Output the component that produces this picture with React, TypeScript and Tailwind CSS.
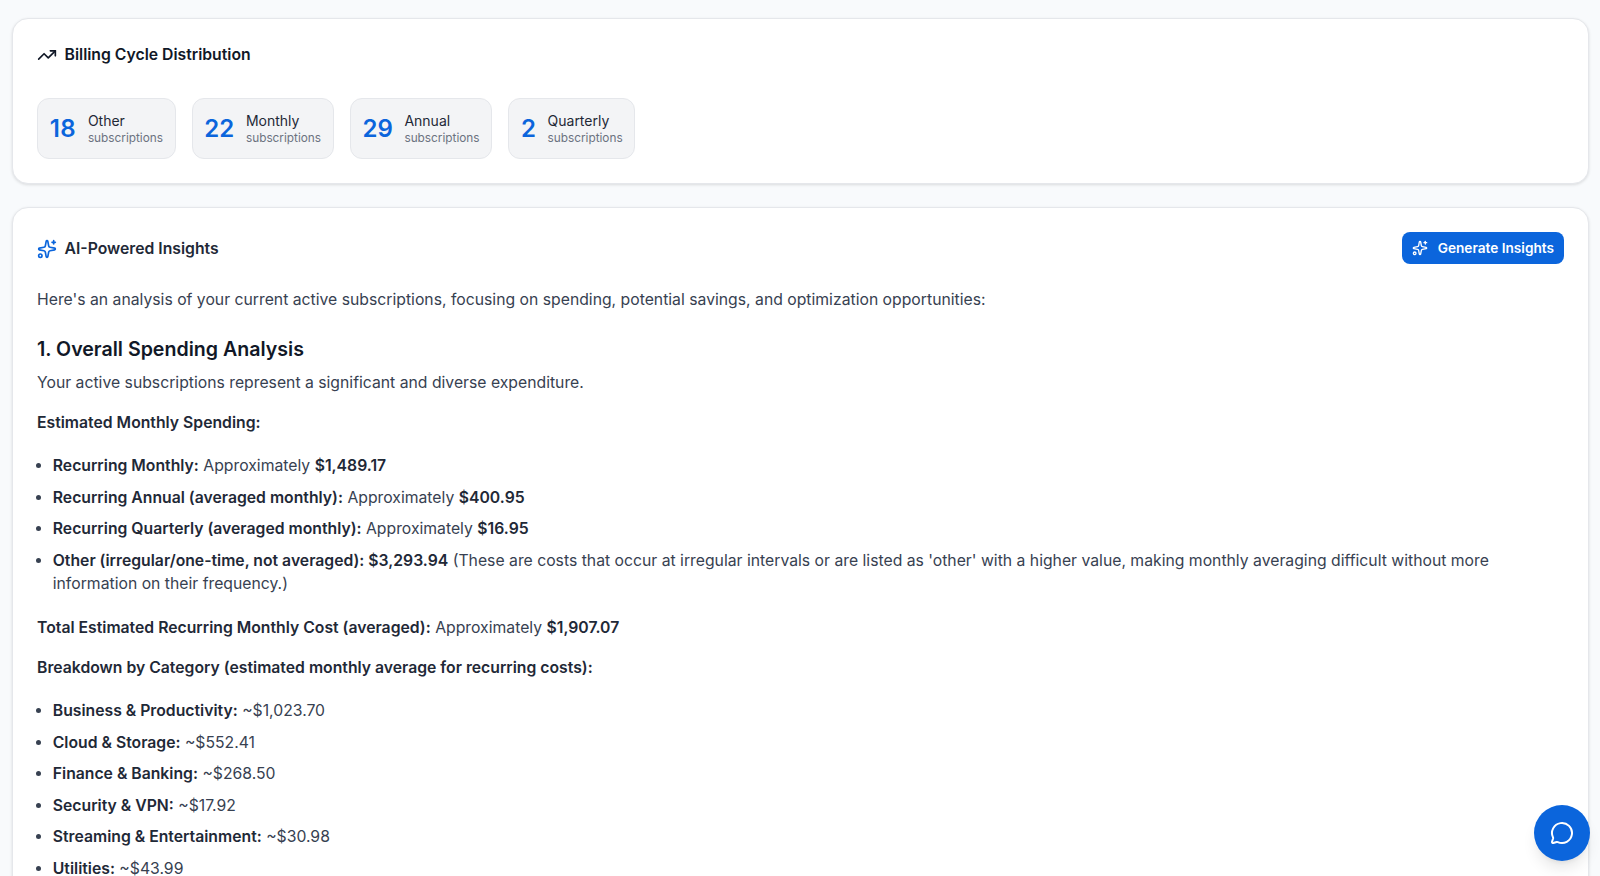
import { TrendingUp, Sparkles, MessageCircle } from "lucide-react";

const cycles = [
  { n: "18", label: "Other", track: "tracking-[0.5px]" },
  { n: "22", label: "Monthly", track: "" },
  { n: "29", label: "Annual", track: "" },
  { n: "2", label: "Quarterly", track: "" },
];

function Item({ children }: { children: React.ReactNode }) {
  return <li className="mb-2 leading-[23.6px]">{children}</li>;
}

function B({ children }: { children: React.ReactNode }) {
  return <b className="font-semibold text-[#1f2937]">{children}</b>;
}

export default function App() {
  return (
    <div className="h-[876px] overflow-hidden bg-[#f8fafc] pr-[11px] pl-3 pt-[18px] font-['Inter',sans-serif] text-[#374151]">
      <section className="h-[166px] rounded-2xl border border-[#e5e7eb] bg-white p-6 shadow-[0_1px_3px_rgba(0,0,0,0.12)]">
        <h2 className="flex h-[24px] items-center gap-[7.5px] text-[15.75px] font-semibold text-[#111827]">
          <TrendingUp size={20} strokeWidth={2} />
          Billing Cycle Distribution
        </h2>
        <div className="mt-[31px] flex gap-4">
          {cycles.map((c) => (
            <div key={c.label} className="flex h-[61px] items-center gap-[11.7px] rounded-xl border border-[#e5e7eb] bg-[#f3f4f6] px-[11.7px]">
              <span className={`text-2xl font-semibold text-[#0b65dc] ${c.track}`}>{c.n}</span>
              <div className="flex flex-col pt-px">
                <span className="text-[14px] leading-[18px] text-[#1f2937]">{c.label}</span>
                <span className="text-[11.8px] leading-[17px] text-[#6b7280]">subscriptions</span>
              </div>
            </div>
          ))}
        </div>
      </section>

      <section className="mt-[23px] h-[800px] rounded-2xl border border-[#e5e7eb] bg-white p-6 text-[15.75px] shadow-[0_1px_3px_rgba(0,0,0,0.12)]">
        <div className="flex h-[32px] items-center justify-between">
          <h2 className="mt-px flex items-center gap-[7.5px] text-[15.75px] font-semibold text-[#1f2937]">
            <Sparkles size={20} className="text-[#0b65dc]" />
            AI-Powered Insights
          </h2>
          <button className="flex h-[32px] items-center gap-[10px] rounded-lg bg-[#0b65dc] px-[10px] text-[13.65px] font-semibold text-white">
            <Sparkles size={16} />
            Generate Insights
          </button>
        </div>
        <p className="mt-[24px] leading-6">Here's an analysis of your current active subscriptions, focusing on spending, potential savings, and optimization opportunities:</p>
        <h3 className="mt-[23px] text-[19.6px] leading-7 font-semibold text-[#111827]">1. Overall Spending Analysis</h3>
        <p className="mt-2 leading-6">Your active subscriptions represent a significant and diverse expenditure.</p>
        <p className="mt-4 leading-6 font-semibold text-[#1f2937]">Estimated Monthly Spending:</p>
        <ul className="mt-[19px] list-disc pl-[15.75px]">
          <Item><B>Recurring Monthly:</B> Approximately <B>$1,489.17</B></Item>
          <Item><B>Recurring Annual (averaged monthly):</B> Approximately <B>$400.95</B></Item>
          <Item><B>Recurring Quarterly (averaged monthly):</B> Approximately <B>$16.95</B></Item>
          <Item><B>Other (irregular/one-time, not averaged): $3,293.94</B> (These are costs that occur at irregular intervals or are listed as 'other' with a higher value, making monthly averaging difficult without more information on their frequency.)</Item>
        </ul>
        <p className="mt-5 leading-6"><B>Total Estimated Recurring Monthly Cost (averaged):</B> Approximately <B>$1,907.07</B></p>
        <p className="mt-4 leading-6 font-semibold text-[#1f2937]">Breakdown by Category (estimated monthly average for recurring costs):</p>
        <ul className="mt-[19px] list-disc pl-[15.75px]">
          <Item><B>Business &amp; Productivity:</B> ~$1,023.70</Item>
          <Item><B>Cloud &amp; Storage:</B> ~$552.41</Item>
          <Item><B>Finance &amp; Banking:</B> ~$268.50</Item>
          <Item><B>Security &amp; VPN:</B> ~$17.92</Item>
          <Item><B>Streaming &amp; Entertainment:</B> ~$30.98</Item>
          <Item><B>Utilities:</B> ~$43.99</Item>
        </ul>
      </section>

      <button className="fixed right-[10.5px] bottom-[15px] flex h-14 w-14 items-center justify-center rounded-full bg-[#0b65dc] text-white shadow-lg">
        <MessageCircle size={24} />
      </button>
    </div>
  );
}
